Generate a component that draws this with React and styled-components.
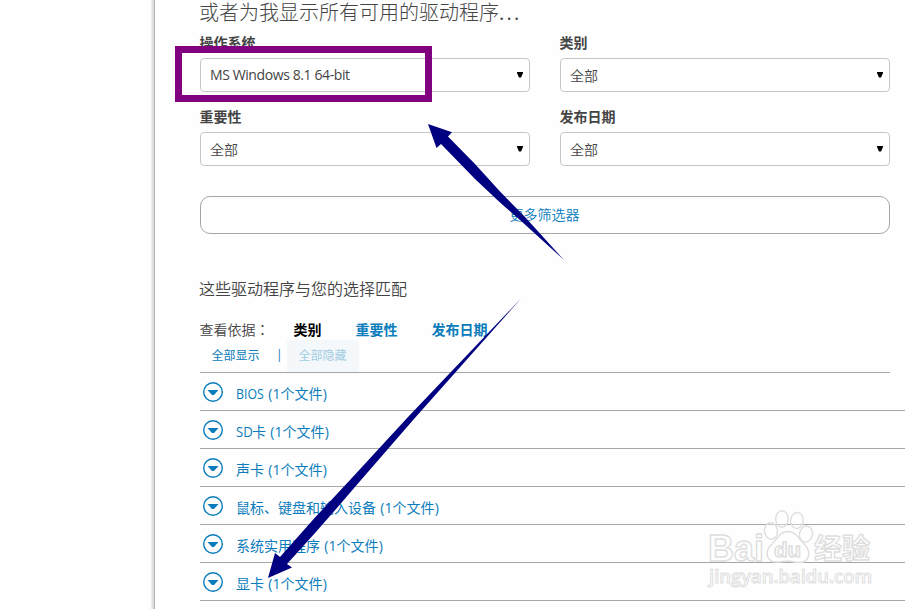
import React from 'react';
import styled, { createGlobalStyle } from 'styled-components';

const GlobalStyle = createGlobalStyle`
  * { box-sizing: border-box; }
  body {
    margin: 0;
    background: #fefefe;
    color: #444;
    font: 14px/20px "Open Sans", "Noto Sans CJK SC", sans-serif;
    overflow: hidden;
  }
`;

const Page = styled.div`
  position: relative;
  display: flex;
  width: 922px;
  height: 609px;
  overflow: hidden;
`;

const Gutter = styled.div`
  flex: 0 0 155px;
  border-right: 1px solid #b4b4b4;
  background: linear-gradient(to right, #fefefe 150px, #d4d4d4 154px);
`;

const Content = styled.main`
  display: flex;
  flex-direction: column;
  width: 750px;
  padding-left: 45px;
`;

const Title = styled.h1`
  margin: 0 0 0 -1px;
  height: 33px;
  font-size: 20px;
  line-height: 24px;
  font-weight: 300;
  font-family: "Noto Sans CJK SC", sans-serif;
  white-space: nowrap;
`;

const Dots = styled.span`
  font-family: "Open Sans", sans-serif;
  font-weight: 400;
  letter-spacing: 2.3px;
`;

const Filters = styled.div`
  display: grid;
  grid-template-columns: 330px 330px;
  grid-auto-rows: 74px;
  column-gap: 30px;
`;

const FieldLabel = styled.label`
  display: block;
  height: 25px;
  margin-left: -0.5px;
  line-height: 20px;
  font-weight: 700;
`;

const SelectBox = styled.div`
  display: flex;
  align-items: center;
  justify-content: space-between;
  height: 34px;
  padding: 0 6px 0 9px;
  border: 1px solid #c6c6c6;
  border-radius: 4px;
  background: #fff;
`;

const Value = styled.span`
  font-family: ${(p) => (p.$latin ? '"Open Sans"' : '"Noto Sans CJK SC"')}, sans-serif;
  font-size: 14px;
  font-weight: ${(p) => (p.$latin ? 400 : 350)};
  letter-spacing: ${(p) => (p.$latin ? '-0.4px' : '0')};
`;

const MoreButton = styled.button`
  flex: none;
  width: 690px;
  height: 38px;
  margin: 15px 0 0;
  padding: 0 1px 2px 0;
  border: 1px solid #a6a6a6;
  border-radius: 10px;
  background: #fff;
  color: #0b7cbb;
  font: 350 14px/20px "Noto Sans CJK SC", sans-serif;
`;

const Subtitle = styled.h2`
  margin: 43px 0 0 -1px;
  height: 43px;
  font-size: 16px;
  line-height: 24px;
  font-weight: 350;
`;

const SortBar = styled.div`
  display: flex;
  height: 20px;
  margin-left: -0.5px;
`;

const SortLabel = styled.span`
  width: 94px;
  height: 20px;
  font-family: "Noto Sans CJK TC", sans-serif;
  font-weight: 350;
  line-height: 19px;
`;

const SortOption = styled.a`
  margin-right: 34px;
  color: ${(p) => (p.$active ? '#000' : '#0b7cbb')};
  font-weight: 700;
`;

const Toggles = styled.div`
  display: flex;
  width: 690px;
  height: 33px;
  border-bottom: 1px solid #a6a6a6;
  font-size: 12px;
  line-height: 32px;
  color: #0b7cbb;
`;

const Toggle = styled.a`
  width: 72px;
  height: 32px;
  padding-right: 1px;
  text-align: center;
  color: ${(p) => (p.$disabled ? '#9fcbe2' : '#0b7cbb')};
  background: ${(p) => (p.$disabled ? '#f5f8fb' : 'transparent')};
`;

const Separator = styled.span`
  width: 15px;
  padding-left: 4px;
  line-height: 30px;
`;

const DriverRow = styled.div`
  display: flex;
  align-items: flex-start;
  width: 705px;
  height: 38px;
  padding: 9px 0 0 3px;
  border-bottom: 1px solid #a6a6a6;
  color: #0b7cbb;
`;

const DriverName = styled.span`
  margin: 2px 0 0 13px;
  white-space: pre;
`;

const FileCount = styled.span`
  word-spacing: 0.6px;
  letter-spacing: 0.05px;
`;

const Narrow = styled.span`
  display: inline-block;
  width: ${(p) => p.$w}px;
  transform: scaleX(${(p) => p.$s});
  transform-origin: 0 50%;
`;

const Overlay = styled.svg`
  position: absolute;
  inset: 0;
  pointer-events: none;
`;

const Highlight = styled.div`
  position: absolute;
  left: 175px;
  top: 46px;
  width: 257px;
  height: 56px;
  border: 7px solid #800080;
`;

function Caret() {
  return (
    <svg width="6" height="6" viewBox="0 0 6 6">
      <path d="M0 0H6V1L4 5.500H2L0 1Z" fill="#000" />
    </svg>
  );
}

function ExpandIcon() {
  return (
    <svg width="20" height="20" viewBox="0 0 20 20">
      <circle cx="10" cy="10" r="9.3" fill="none" stroke="#0b7cbb" strokeWidth="1.4" />
      <path d="M4.500 8H15.500L11 13H9Z" fill="#0b7cbb" />
    </svg>
  );
}

function Field({ label, value, latin }) {
  return (
    <div>
      <FieldLabel>{label}</FieldLabel>
      <SelectBox>
        <Value $latin={latin}>{value}</Value>
        <Caret />
      </SelectBox>
    </div>
  );
}

function Watermark() {
  return (
    <g fill="#fff" fillOpacity="0.35" stroke="#dedede" strokeWidth="1.4" strokeLinejoin="round">
      <text x="708" y="560.5" fontFamily="Liberation Sans" fontWeight="700" fontSize="36" textLength="56" lengthAdjust="spacingAndGlyphs">Bai</text>
      <ellipse cx="771" cy="531" rx="6.5" ry="8.3" transform="rotate(-8 771 531)" />
      <ellipse cx="782" cy="519" rx="6.3" ry="8.3" />
      <ellipse cx="797" cy="520.5" rx="6.3" ry="8" transform="rotate(8 797 520)" />
      <ellipse cx="806" cy="534" rx="6.5" ry="8" transform="rotate(12 806 534)" />
      <path d="M788 531.500C796 531.500 799 539 805 545C811 551 810 562.500 800 562.500C794 562.500 791 561 788 561C784 561 780 562.500 775 562C766 561 765 551 771 545C778 539 779 531.500 788 531.500Z" />
      <text x="774" y="557" fontFamily="Liberation Sans" fontWeight="700" fontSize="20" textLength="27" lengthAdjust="spacingAndGlyphs">du</text>
      <text x="814" y="559" fontFamily="Noto Sans CJK SC" fontWeight="700" fontSize="28" textLength="56">经验</text>
      <text x="709" y="583" fontFamily="Open Sans" fontWeight="600" fontSize="18" textLength="163" lengthAdjust="spacingAndGlyphs" strokeWidth="1">jingyan.baidu.com</text>
    </g>
  );
}

const filters = [
  { label: '操作系统', value: 'MS Windows 8.1 64-bit', latin: true },
  { label: '类别', value: '全部' },
  { label: '重要性', value: '全部' },
  { label: '发布日期', value: '全部' },
];

const drivers = [
  { latin: 'BIOS', width: 28, scale: 0.88, name: '' },
  { latin: 'SD', width: 16, scale: 0.94, name: '卡' },
  { name: '声卡' },
  { name: '鼠标、键盘和输入设备' },
  { name: '系统实用程序' },
  { name: '显卡' },
];

export default function App() {
  return (
    <Page>
      <GlobalStyle />
      <Gutter />
      <Content>
        <Title>或者为我显示所有可用的驱动程序<Dots>...</Dots></Title>
        <Filters>
          {filters.map((f) => <Field key={f.label} {...f} />)}
        </Filters>
        <MoreButton>更多筛选器</MoreButton>
        <Subtitle>这些驱动程序与您的选择匹配</Subtitle>
        <SortBar>
          <SortLabel>查看依据：</SortLabel>
          <SortOption $active>类别</SortOption>
          <SortOption>重要性</SortOption>
          <SortOption>发布日期</SortOption>
        </SortBar>
        <Toggles>
          <Toggle>全部显示</Toggle>
          <Separator>|</Separator>
          <Toggle $disabled>全部隐藏</Toggle>
        </Toggles>
        {drivers.map((d) => (
          <DriverRow key={d.latin || d.name}>
            <ExpandIcon />
            <DriverName>
              {d.latin && <Narrow $w={d.width} $s={d.scale}>{d.latin}</Narrow>}
              {d.name}<FileCount> (1个文件)</FileCount>
            </DriverName>
          </DriverRow>
        ))}
      </Content>
      <Highlight />
      <Overlay width="922" height="609" viewBox="0 0 922 609">
        <Watermark />
        <g fill="#000080">
          <path d="M428 124L452 132.300L448 136.500L475 164L500 191.500L525 217L564 260L520 220L500 202.500L475 179L441 144L436.500 148Z" />
          <path d="M268 578L275 553L280 557L315 517.500L350 480L408 417L521.500 298L414 419L361 480L336.500 508.500L315 533L287 564L292 567.500Z" />
        </g>
      </Overlay>
    </Page>
  );
}
